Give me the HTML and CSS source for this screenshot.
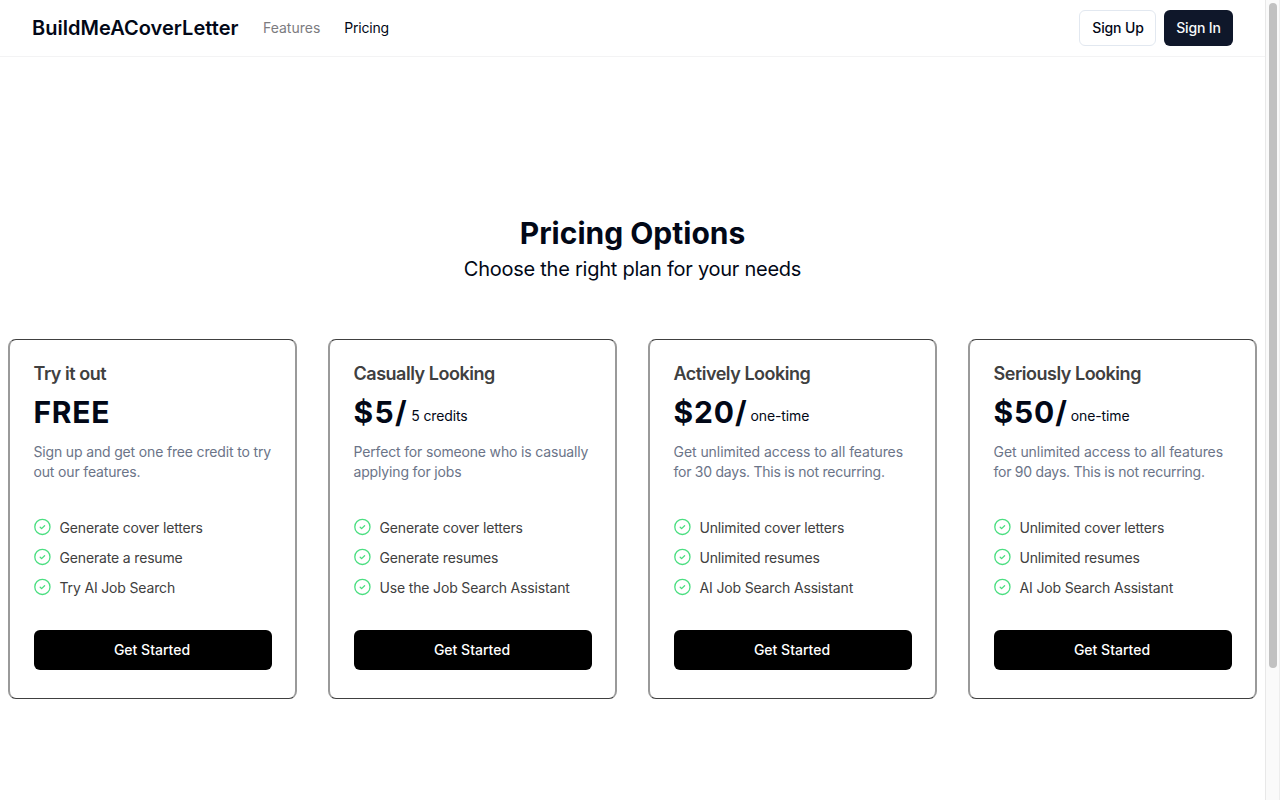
FILE: index.html
```html
<!doctype html>
<html lang="en">

<head>
  <meta charset="UTF-8" />
  <meta name="viewport" content="width=device-width, initial-scale=1.0" />
  <title>BuildMeACoverLetter</title>
  <link rel="stylesheet" href="styles.css">
</head>

<body>
  <svg class="sprite">
    <symbol id="check" viewBox="0 0 18 18">
      <circle cx="8.4" cy="8.9" r="7.6" />
      <path d="M6.2 9.2l1.4 1.4 3-2.9" />
    </symbol>
  </svg>

  <header class="navbar">
    <a class="logo">BuildMeACoverLetter</a>
    <nav class="links">
      <a class="link muted">Features</a>
      <a class="link active">Pricing</a>
    </nav>
    <div class="actions">
      <button class="btn btn-outline">Sign Up</button>
      <button class="btn btn-dark">Sign In</button>
    </div>
  </header>

  <main class="pricing">
    <h1 class="heading">Pricing Options</h1>
    <p class="subheading">Choose the right plan for your needs</p>

    <div class="plans">
      <section class="card">
        <h2 class="plan">Try it out</h2>
        <div class="price"><span class="amount free">FREE</span></div>
        <p class="desc">Sign up and get one free credit to try<br>out our features.</p>
        <ul class="features">
          <li><svg class="icon"><use href="#check" /></svg>Generate cover letters</li>
          <li><svg class="icon"><use href="#check" /></svg>Generate a resume</li>
          <li><svg class="icon"><use href="#check" /></svg>Try AI Job Search</li>
        </ul>
        <button class="cta">Get Started</button>
      </section>

      <section class="card">
        <h2 class="plan">Casually Looking</h2>
        <div class="price"><span class="amount single">$5/</span><span class="unit">5 credits</span></div>
        <p class="desc">Perfect for someone who is casually<br>applying for jobs</p>
        <ul class="features">
          <li><svg class="icon"><use href="#check" /></svg>Generate cover letters</li>
          <li><svg class="icon"><use href="#check" /></svg>Generate resumes</li>
          <li><svg class="icon"><use href="#check" /></svg>Use the Job Search Assistant</li>
        </ul>
        <button class="cta">Get Started</button>
      </section>

      <section class="card">
        <h2 class="plan">Actively Looking</h2>
        <div class="price"><span class="amount">$20/</span><span class="unit">one-time</span></div>
        <p class="desc"><span class="loose">Get unlimited access to all features</span><br><span class="tight">for 30 days. This is not recurring.</span></p>
        <ul class="features">
          <li><svg class="icon"><use href="#check" /></svg>Unlimited cover letters</li>
          <li><svg class="icon"><use href="#check" /></svg>Unlimited resumes</li>
          <li><svg class="icon"><use href="#check" /></svg>AI Job Search Assistant</li>
        </ul>
        <button class="cta">Get Started</button>
      </section>

      <section class="card">
        <h2 class="plan">Seriously Looking</h2>
        <div class="price"><span class="amount">$50/</span><span class="unit">one-time</span></div>
        <p class="desc"><span class="loose">Get unlimited access to all features</span><br><span class="tight">for 90 days. This is not recurring.</span></p>
        <ul class="features">
          <li><svg class="icon"><use href="#check" /></svg>Unlimited cover letters</li>
          <li><svg class="icon"><use href="#check" /></svg>Unlimited resumes</li>
          <li><svg class="icon"><use href="#check" /></svg>AI Job Search Assistant</li>
        </ul>
        <button class="cta">Get Started</button>
      </section>
    </div>
  </main>

  <div class="scrollbar"><div class="thumb"></div></div>
</body>

</html>
```

FILE: styles.css
```css
* {
  box-sizing: border-box;
}

body {
  margin: 0;
  height: 800px;
  overflow: hidden;
  padding-right: 15px;
  background-color: white;
  color: #020817;
  font-family: Inter, "Liberation Sans", sans-serif;
}

h1,
h2,
p,
ul {
  margin: 0;
  padding: 0;
}

button {
  font-family: inherit;
  cursor: pointer;
}

.sprite {
  display: none;
}

.navbar {
  display: flex;
  align-items: center;
  height: 57px;
  padding: 0 32px;
  border-bottom: 1px solid #f3f3f4;
}

.logo {
  font-size: 20px;
  font-weight: 600;
  letter-spacing: 0.03px;
}

.links {
  display: flex;
  gap: 24px;
  margin-left: 24.5px;
  padding-bottom: 1px;
}

.link {
  font-size: 14px;
}

.muted {
  color: #7c7c7f;
}

.active {
  letter-spacing: -0.2px;
}

.actions {
  display: flex;
  gap: 8px;
  margin-left: auto;
}

.btn {
  height: 36px;
  padding: 0 0 1px;
  border: 0;
  border-radius: 6px;
  font-size: 14px;
  font-weight: 500;
  letter-spacing: -0.15px;
}

.btn-outline {
  width: 77px;
  padding-left: 1px;
  border: 1px solid #e2e8f0;
  background-color: white;
  color: #020817;
}

.btn-dark {
  width: 69px;
  background-color: #0f172a;
  color: #f8fafc;
}

.pricing {
  padding-top: 158px;
}

.heading {
  font-size: 30px;
  font-weight: 700;
  line-height: 36px;
  text-align: center;
}

.subheading {
  padding-top: 4px;
  font-size: 20px;
  line-height: 28px;
  letter-spacing: -0.25px;
  text-align: center;
}

.plans {
  display: flex;
  justify-content: center;
  gap: 31px;
  margin-top: 56px;
}

.card {
  width: 289px;
  height: 360px;
  padding: 20px 23.5px;
  border: solid;
  border-width: 1px 2px;
  border-color: #404040 #9a9a9a;
  border-radius: 8px;
}

.plan {
  color: #404040;
  font-size: 18px;
  font-weight: 600;
  line-height: 28px;
  letter-spacing: -0.48px;
}

.price {
  display: flex;
  gap: 3px;
  height: 36px;
  margin-top: 6px;
  line-height: 36px;
}

.amount {
  font-size: 30px;
  font-weight: 700;
  letter-spacing: 0.9px;
}

.free {
  letter-spacing: 0.7px;
}

.single {
  letter-spacing: 1.4px;
}

.unit {
  padding-top: 4px;
  font-size: 14px;
  letter-spacing: -0.12px;
}

.desc {
  margin-top: 12px;
  color: #6b7488;
  font-size: 14px;
  line-height: 20px;
  letter-spacing: -0.16px;
  white-space: nowrap;
}

.loose {
  letter-spacing: -0.06px;
}

.tight {
  letter-spacing: -0.25px;
}

.features {
  display: flex;
  flex-direction: column;
  gap: 10px;
  margin-top: 36px;
  list-style: none;
}

.features li {
  display: flex;
  gap: 8px;
  color: #404040;
  font-size: 14px;
  line-height: 20px;
  letter-spacing: -0.16px;
}

.icon {
  width: 18px;
  height: 18px;
  fill: none;
  stroke: #4ade80;
  stroke-width: 1.3;
  stroke-linecap: round;
  stroke-linejoin: round;
}

.cta {
  width: 238px;
  height: 40px;
  margin-top: 32px;
  padding: 0 1px 1px 0;
  border: 0;
  border-radius: 6px;
  background-color: black;
  color: white;
  font-size: 14px;
  font-weight: 500;
}

.scrollbar {
  position: fixed;
  top: 0;
  right: 0;
  width: 15px;
  height: 100%;
  padding: 3px 3px 0;
  border-left: 1px solid #e8e8e8;
  border-right: 1px solid #ededed;
  background-color: #fafafa;
}

.thumb {
  width: 8px;
  height: 665px;
  border-radius: 4px;
  background-color: #c1c1c1;
}
```
